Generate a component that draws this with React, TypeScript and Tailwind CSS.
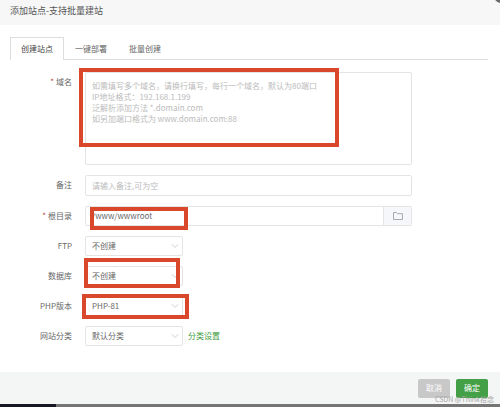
import type { ReactNode } from 'react';

interface FieldRowProps {
  id: string;
  label: string;
  required?: boolean;
  children: ReactNode;
}

const tabs = ['创建站点', '一键部署', '批量创建'];

const domainHint = [
  '如需填写多个域名，请换行填写，每行一个域名，默认为80端口',
  'IP地址格式：192.168.1.199',
  '泛解析添加方法 *.domain.com',
  '如另加端口格式为 www.domain.com:88',
].join('\n');

function FieldRow({ id, label, required, children }: FieldRowProps) {
  return (
    <div className="flex items-start">
      <label htmlFor={id} className="w-[73px] shrink-0 pr-px text-right leading-5">
        {required && <span className="mr-0.5 text-[#b0483a]">*</span>}
        {label}
      </label>
      <div className="ml-3 flex min-w-0 flex-1 items-center">{children}</div>
    </div>
  );
}

function Mark({ className }: { className: string }) {
  return <div className={`pointer-events-none absolute border-4 border-[#d9482b] ${className}`} />;
}

function SelectBox({ id, value, mark }: { id: string; value: string; mark?: ReactNode }) {
  return (
    <div className="relative w-[98px]">
      <select
        id={id}
        className="block h-5 w-full appearance-none rounded-xs border border-[#e4e4e4] bg-white px-1.5 text-[#666]"
      >
        <option>{value}</option>
      </select>
      <svg
        className="pointer-events-none absolute top-[7px] right-1 h-1.5 w-2"
        viewBox="0 0 8 6"
        fill="none"
        stroke="#c0c4cc"
      >
        <path d="M.8 1.2 4 4.5 7.2 1.2" strokeWidth="0.8" />
      </svg>
      {mark}
    </div>
  );
}

export default function App() {
  return (
    <div className="relative flex min-h-screen flex-col overflow-hidden bg-white font-['Noto_Sans_CJK_SC',sans-serif] text-[8px] text-[#666]">
      <header className="flex h-[25px] items-center bg-[#f7f7f7] px-2.5">
        <h1 className="-mt-1 text-[9px] leading-4 text-[#555]">添加站点-支持批量建站</h1>
      </header>
      <button
        aria-label="关闭"
        className="absolute -top-3 -right-3 h-4 w-[19px] rounded-full border border-white bg-[#6b6b6b]"
      />

      <main className="flex-1 pt-3">
        <nav className="mr-3 ml-2.5 flex h-[23px] border-b border-[#ddd]">
          {tabs.map((tab, i) => (
            <button
              key={tab}
              className={`h-[23px] w-[54px] text-center ${
                i === 0 ? 'border border-b-0 border-[#ddd] bg-white text-[#444]' : ''
              }`}
            >
              {tab}
            </button>
          ))}
        </nav>

        <form className="mt-3 mr-[88px] flex flex-col gap-2.5">
          <FieldRow id="domain" label="域名" required>
            <div className="relative w-full">
              <textarea
                id="domain"
                placeholder={domainHint}
                className="block h-[93px] w-full resize-none rounded-xs border border-[#e4e4e4] px-1.5 py-[7px] leading-[11px] placeholder:text-[#bbb]"
              />
              <Mark className="-top-1 -left-1.5 h-[79px] w-[260px]" />
            </div>
          </FieldRow>
          <FieldRow id="remark" label="备注">
            <input
              id="remark"
              placeholder="请输入备注,可为空"
              className="h-[21px] w-full rounded-xs border border-[#e4e4e4] px-1.5 placeholder:text-[#bbb]"
            />
          </FieldRow>
          <FieldRow id="root-dir" label="根目录" required>
            <div className="relative flex h-5 w-full">
              <input
                id="root-dir"
                defaultValue="/www/wwwroot"
                className="min-w-0 flex-1 rounded-l-xs border border-[#e4e4e4] px-1.5"
              />
              <button
                type="button"
                aria-label="选择目录"
                className="flex w-7 items-center justify-center rounded-r-xs border border-l-0 border-[#e4e4e4] bg-[#f5f7fa]"
              >
                <svg className="h-2 w-2.5" viewBox="0 0 10 8" fill="none" stroke="#a5a9b0">
                  <path d="M.5.5h3l1 1.2h5v5.8h-9z" />
                </svg>
              </button>
              <Mark className="top-px left-[5px] h-[23px] w-[98px]" />
            </div>
          </FieldRow>
          <FieldRow id="ftp" label="FTP">
            <SelectBox id="ftp" value="不创建" />
          </FieldRow>
          <FieldRow id="database" label="数据库">
            <SelectBox
              id="database"
              value="不创建"
              mark={<Mark className="-top-2 -left-px h-[30px] w-24" />}
            />
          </FieldRow>
          <FieldRow id="php" label="PHP版本">
            <SelectBox
              id="php"
              value="PHP-81"
              mark={<Mark className="-top-0.5 -left-[3px] h-[25px] w-[107px]" />}
            />
          </FieldRow>
          <FieldRow id="category" label="网站分类">
            <SelectBox id="category" value="默认分类" />
            <a href="#category" className="ml-[5px] text-[#3f9c42]">
              分类设置
            </a>
          </FieldRow>
        </form>
      </main>

      <footer className="relative flex h-8 items-center justify-end gap-1.5 bg-[#f4f6f6] pr-3 text-white">
        <button className="h-[19px] w-8 rounded-xs bg-[#c8c8c8]">取消</button>
        <button className="h-[19px] w-8 rounded-xs bg-[#43a047]">确定</button>
        <span className="absolute right-1.5 -bottom-px text-[7px] leading-[11px] text-[#a5a5a5]">
          CSDN @Think拾念
        </span>
      </footer>
      <div className="h-[3px] bg-[#757575]">
        <div className="h-full w-14 bg-[#171721]" />
      </div>
    </div>
  );
}
